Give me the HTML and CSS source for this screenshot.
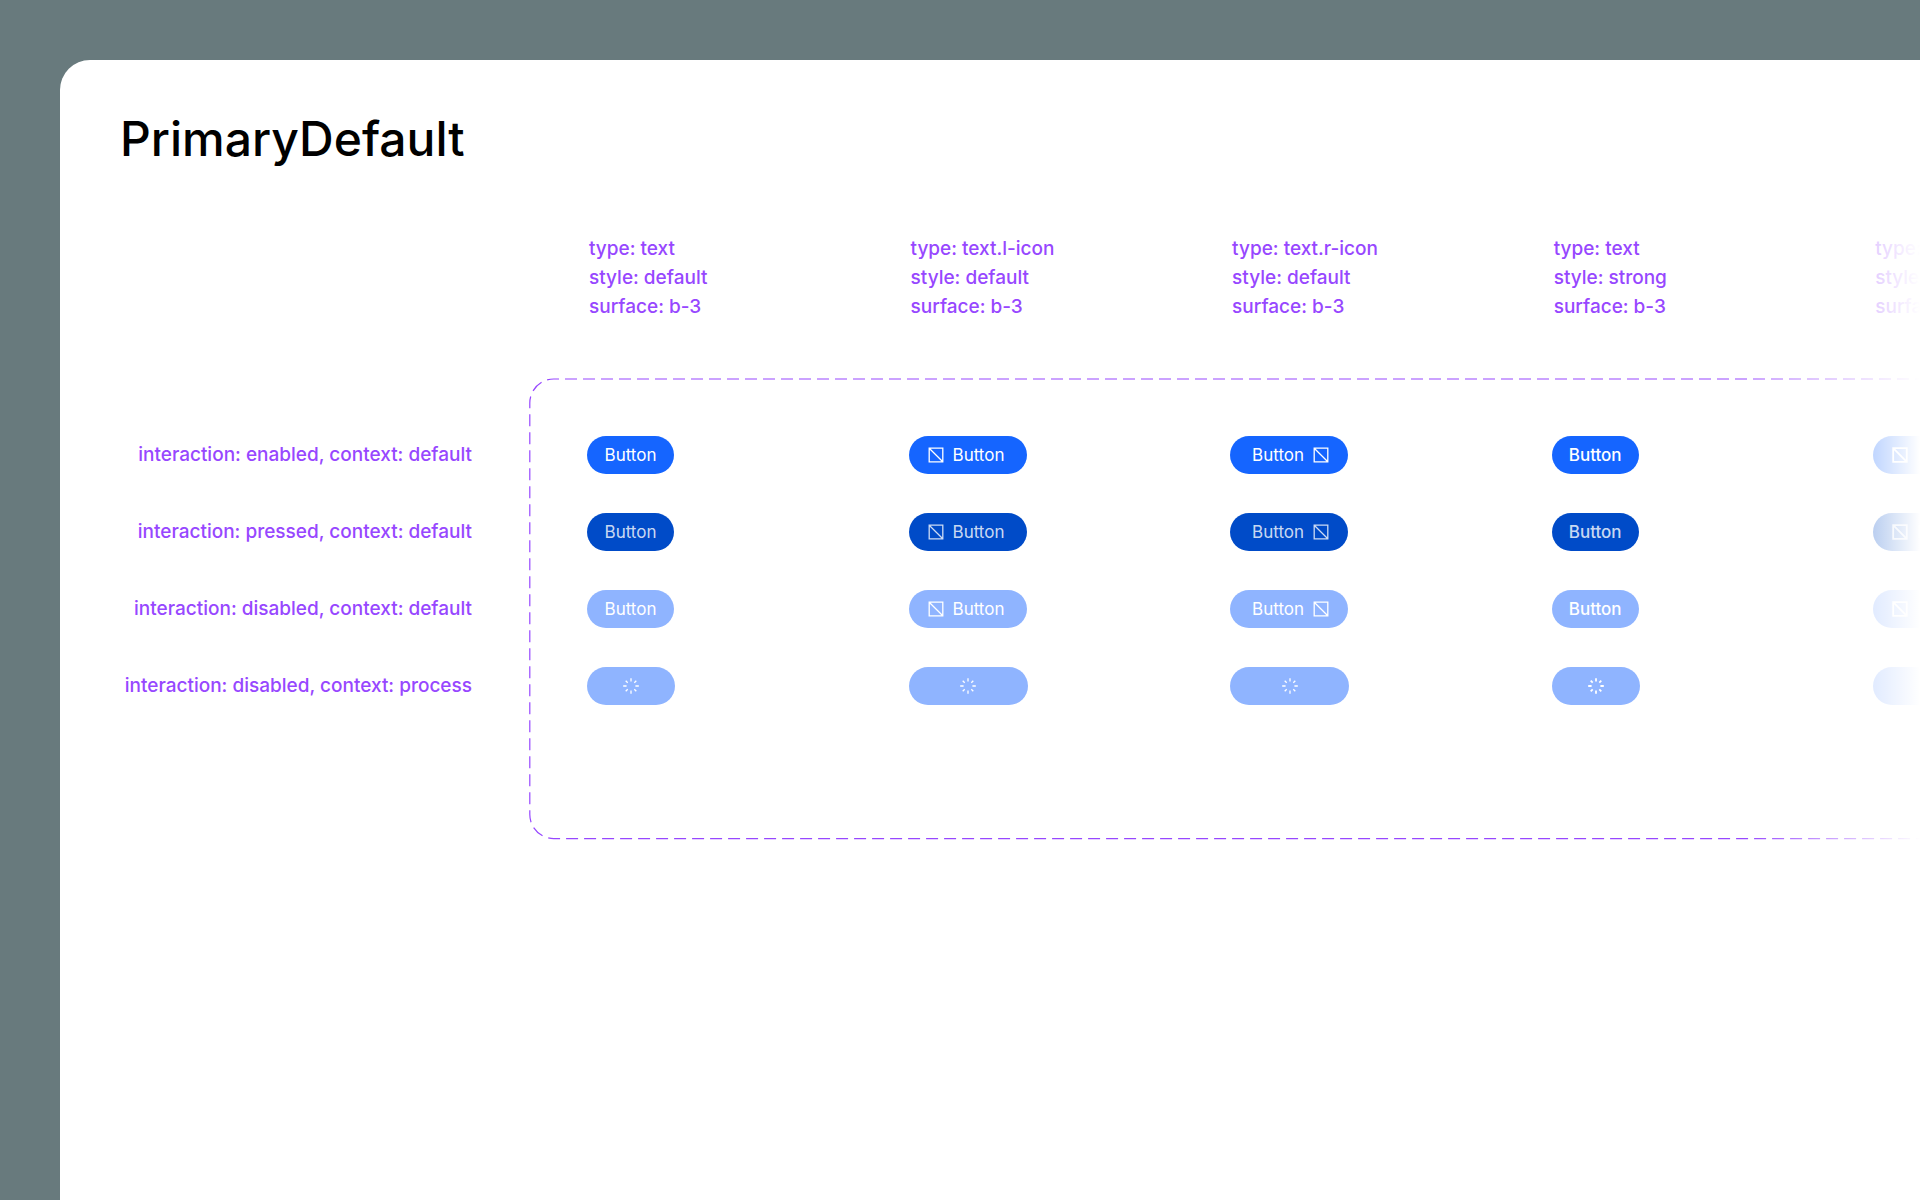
FILE: index.html
```html
<!DOCTYPE html>
<html lang="en">
<head>
<meta charset="utf-8">
<meta name="viewport" content="width=device-width, initial-scale=1">
<title>PrimaryDefault</title>
<link rel="stylesheet" href="styles.css">
</head>
<body>
<svg class="sprite" aria-hidden="true">
  <symbol id="icon-box" viewBox="0 0 20 20">
    <path d="M3.2 3.2H16.8V16.8H3.2ZM3.2 3.2L16.8 16.8"/>
  </symbol>
  <symbol id="icon-spinner" viewBox="0 0 20 20">
    <path d="M10 2.2V5.6M10 14.4V17.8M2.2 10H5.6M14.4 10H17.8M4.7 4.7L6.7 6.7M13.3 13.3L15.3 15.3M4.7 15.3L6.7 13.3M13.3 6.7L15.3 4.7"/>
  </symbol>
</svg>
<main class="panel">
  <h1 class="title">PrimaryDefault</h1>
  <div class="sheet">
    <div class="types columns">
      <p class="type">type: text<br>style: default<br>surface: b-3</p>
      <p class="type">type: text.l-icon<br>style: default<br>surface: b-3</p>
      <p class="type">type: text.r-icon<br>style: default<br>surface: b-3</p>
      <p class="type">type: text<br>style: strong<br>surface: b-3</p>
      <p class="type">type: text.l-icon<br>style: strong<br>surface: b-3</p>
    </div>
    <div class="states">
      <p class="state">interaction: enabled, context: default</p>
      <p class="state">interaction: pressed, context: default</p>
      <p class="state">interaction: disabled, context: default</p>
      <p class="state">interaction: disabled, context: process</p>
    </div>
    <div class="frame">
      <svg class="outline" height="462" aria-hidden="true">
        <path d="M6006 1H24.8A24 24 0 0 0 .8 25V436.6A24 24 0 0 0 24.8 460.6H6006"/>
      </svg>
      <div class="variants columns">
        <button class="btn" type="button">Button</button>
        <button class="btn icon-left" type="button"><svg class="icon"><use href="#icon-box"/></svg>Button</button>
        <button class="btn icon-right" type="button">Button<svg class="icon"><use href="#icon-box"/></svg></button>
        <button class="btn strong" type="button">Button</button>
        <button class="btn icon-left strong" type="button"><svg class="icon"><use href="#icon-box"/></svg>Button</button>

        <button class="btn pressed" type="button">Button</button>
        <button class="btn icon-left pressed" type="button"><svg class="icon"><use href="#icon-box"/></svg>Button</button>
        <button class="btn icon-right pressed" type="button">Button<svg class="icon"><use href="#icon-box"/></svg></button>
        <button class="btn strong pressed" type="button">Button</button>
        <button class="btn icon-left strong pressed" type="button"><svg class="icon"><use href="#icon-box"/></svg>Button</button>

        <button class="btn" type="button" disabled>Button</button>
        <button class="btn icon-left" type="button" disabled><svg class="icon"><use href="#icon-box"/></svg>Button</button>
        <button class="btn icon-right" type="button" disabled>Button<svg class="icon"><use href="#icon-box"/></svg></button>
        <button class="btn strong" type="button" disabled>Button</button>
        <button class="btn icon-left strong" type="button" disabled><svg class="icon"><use href="#icon-box"/></svg>Button</button>

        <button class="btn process" type="button" aria-label="Loading" disabled><svg class="icon"><use href="#icon-spinner"/></svg></button>
        <button class="btn process wide" type="button" aria-label="Loading" disabled><svg class="icon"><use href="#icon-spinner"/></svg></button>
        <button class="btn process wide" type="button" aria-label="Loading" disabled><svg class="icon"><use href="#icon-spinner"/></svg></button>
        <button class="btn process strong" type="button" aria-label="Loading" disabled><svg class="icon"><use href="#icon-spinner"/></svg></button>
        <button class="btn process wide strong" type="button" aria-label="Loading" disabled><svg class="icon"><use href="#icon-spinner"/></svg></button>
      </div>
    </div>
  </div>
</main>
</body>
</html>
```
FILE: styles.css
```css
* {
  box-sizing: border-box;
}

body {
  margin: 0;
  min-height: 100vh;
  padding: 60px 0 0 60px;
  display: flex;
  background: #687a7d;
  font-family: Inter, "Liberation Sans", sans-serif;
}

.sprite {
  position: absolute;
  width: 0;
  height: 0;
}

.panel {
  position: relative;
  flex: 1;
  min-width: 0;
  padding: 50px 0 60px 60px;
  overflow: hidden;
  background: #fff;
  border-radius: 30px 0 0 0;
}

/* Fade over the columns that run off the right edge */
.panel::after {
  content: "";
  position: absolute;
  top: 0;
  right: 0;
  bottom: 0;
  width: 176px;
  background: linear-gradient(to right, rgba(255, 255, 255, 0), #fff);
  pointer-events: none;
}

.title {
  margin: 0 0 66px;
  font-size: 48px;
  line-height: 58px;
  font-weight: 500;
  color: #000;
}

.sheet {
  display: grid;
  grid-template-columns: 352px minmax(0, 1fr);
  column-gap: 57px;
  row-gap: 57px;
}

.columns {
  display: grid;
  grid-template-columns: repeat(4, minmax(0, 55fr)) minmax(0, 8fr);
  padding-left: 58px;
}

.types {
  grid-column: 2;
}

.type,
.state {
  margin: 0;
  font-size: 19px;
  font-weight: 500;
  color: #9747ff;
  white-space: nowrap;
}

.type {
  padding-left: 2px;
  line-height: 29px;
}

.states {
  display: grid;
  align-content: start;
  row-gap: 39px;
  padding-top: 58px;
  text-align: right;
}

.state {
  line-height: 38px;
}

.frame {
  position: relative;
}

.outline {
  position: absolute;
  top: 0;
  left: 0;
  width: 100%;
  fill: none;
  stroke: #9747ff;
  stroke-width: 1.2;
  stroke-dasharray: 12 6;
}

.variants {
  position: relative;
  row-gap: 39px;
  padding-top: 58px;
  padding-bottom: 135px;
  justify-items: start;
}

.btn {
  min-width: 87px;
  height: 38px;
  padding: 0 17px;
  display: flex;
  align-items: center;
  justify-content: center;
  gap: 7px;
  border: 0;
  border-radius: 19px;
  background: #1565ff;
  color: #fff;
  font-family: inherit;
  font-size: 17px;
  line-height: 24px;
  font-weight: 400;
  white-space: nowrap;
}

.btn.strong {
  font-weight: 500;
}

.btn.icon-left {
  padding: 0 22px 0 17px;
}

.btn.icon-right {
  padding: 0 17px 0 22px;
}

.btn.pressed {
  background: #004bc8;
  color: rgba(255, 255, 255, 0.8);
}

.btn:disabled {
  background: #8fb4ff;
}

.btn.process {
  width: 88px;
}

.btn.process.wide {
  width: 119px;
}

.icon {
  flex: none;
  width: 20px;
  height: 20px;
  fill: none;
  stroke: currentColor;
  stroke-width: 1.3;
}

.strong .icon {
  stroke-width: 1.8;
}
```
